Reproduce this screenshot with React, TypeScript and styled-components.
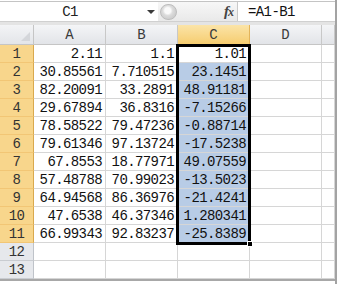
import React from "react";
import styled, { createGlobalStyle } from "styled-components";

const Global = createGlobalStyle`
  html, body { margin: 0; padding: 0; background: #ffffff; }
  #root { width: 337px; height: 284px; overflow: hidden; }
`;

const MONO = `"Liberation Mono", "DejaVu Sans Mono", monospace`;

const Window = styled.div`
  width: 337px;
  height: 284px;
  box-sizing: border-box;
  border-right: 2px solid #a3a3a3;
  padding-top: 1px;
  background: #ffffff;
  display: flex;
  flex-direction: column;
  overflow: hidden;
  font-family: ${MONO};
`;

const FormulaBar = styled.div`
  height: 20px;
  box-sizing: border-box;
  border-top: 1px solid #c4c4c4;
  display: flex;
  align-items: stretch;
  background: #ffffff;
`;

const NameBox = styled.div`
  width: 158px;
  display: flex;
  align-items: center;
  position: relative;
  color: #222;
  font-size: 14px;
  letter-spacing: -0.6px;
`;

const NameText = styled.div`
  width: 140px;
  text-align: center;
`;

const Arrow = styled.div`
  width: 0;
  height: 0;
  border-left: 4px solid transparent;
  border-right: 4px solid transparent;
  border-top: 4px solid #3a3a3a;
  margin-left: 7px;
  margin-top: 1px;
`;

const ButtonArea = styled.div`
  width: 79px;
  display: flex;
  align-items: center;
  background: linear-gradient(#f7f7f7, #e9e9e9);
  border-right: 1px solid #c9c9c9;
  position: relative;
`;

const Grip = styled.div`
  width: 17px;
  height: 16px;
  margin-left: 2px;
  border-radius: 8px;
  background: radial-gradient(circle at 45% 40%, #fafafa 0 3px, #dcdcdc 5px, #cfcfcf 8px);
  border: 1px solid #bdbdbd;
  box-sizing: border-box;
`;

const Fx = styled.div`
  margin-left: auto;
  margin-right: 4px;
  font-family: "Liberation Serif", "DejaVu Serif", serif;
  font-style: italic;
  font-weight: bold;
  font-size: 15px;
  color: #444;
  letter-spacing: -1px;
  & span { font-size: 12px; }
`;

const FormulaInput = styled.div`
  flex: 1;
  display: flex;
  align-items: center;
  padding-left: 10px;
  font-size: 14px;
  letter-spacing: -0.6px;
  color: #111;
`;

const Strip = styled.div`
  height: 3px;
  background: #e4e4e4;
  border-top: 1px solid #d0d0d0;
`;

const SheetArea = styled.div`
  position: relative;
  flex: 1;
  display: flex;
  flex-direction: column;
`;

const Grid = styled.div`
  display: grid;
  grid-template-columns: 34px 72px 72px 72px 72px 1fr;
  grid-template-rows: 20px repeat(13, 18px);
`;

const Corner = styled.div`
  background: linear-gradient(#f3f4f6, #e3e5e9);
  border-right: 1px solid #c5c5c5;
  border-bottom: 1px solid #c5c5c5;
  position: relative;
  &::after {
    content: "";
    position: absolute;
    right: 3px;
    bottom: 3px;
    width: 0;
    height: 0;
    border-left: 9px solid transparent;
    border-bottom: 9px solid #d4d6da;
  }
`;

const ColHead = styled.div<{ $sel?: boolean }>`
  background: ${(p) =>
    p.$sel
      ? "linear-gradient(#fbe4a8, #f6cd70)"
      : "linear-gradient(#f4f5f7, #e2e4e8)"};
  border-right: 1px solid ${(p) => (p.$sel ? "#e3b45a" : "#c8c8c8")};
  border-bottom: 1px solid ${(p) => (p.$sel ? "#e0ae50" : "#c5c5c5")};
  display: flex;
  align-items: center;
  justify-content: center;
  font-size: 14px;
  color: #3a3a3a;
`;

const RowHead = styled.div<{ $sel?: boolean }>`
  background: ${(p) => (p.$sel ? "#f8d68c" : "#e6e8ec")};
  border-right: 1px solid ${(p) => (p.$sel ? "#d9a94e" : "#bfc3c9")};
  border-bottom: 1px solid ${(p) => (p.$sel ? "#f2c675" : "#c9ccd1")};
  display: flex;
  align-items: center;
  justify-content: center;
  font-size: 14px;
  color: #333;
  letter-spacing: -0.6px;
`;

const Cell = styled.div<{ $sel?: boolean }>`
  background: ${(p) => (p.$sel ? "#b8cce6" : "#ffffff")};
  border-right: 1px solid #d6d6d6;
  border-bottom: 1px solid #d6d6d6;
  display: flex;
  align-items: center;
  justify-content: flex-end;
  padding-right: 3px;
  font-size: 14px;
  letter-spacing: -0.6px;
  color: #111;
  overflow: hidden;
  white-space: nowrap;
`;

const Selection = styled.div`
  position: absolute;
  left: 176px;
  top: -1px;
  width: 75px;
  height: 201px;
  box-sizing: border-box;
  border: 3px solid #000;
  pointer-events: none;
  margin-top: 20px;
`;

const Handle = styled.div`
  position: absolute;
  right: -5px;
  bottom: -5px;
  width: 6px;
  height: 6px;
  background: #000;
  border: 1px solid #fff;
  box-sizing: border-box;
`;

const BottomEdge = styled.div`
  height: 2px;
  background: #a8a8a8;
`;

const A = ["2.11", "30.85561", "82.20091", "29.67894", "78.58522", "79.61346", "67.8553", "57.48788", "64.94568", "47.6538", "66.99343"];
const B = ["1.1", "7.710515", "33.2891", "36.8316", "79.47236", "97.13724", "18.77971", "70.99023", "86.36976", "46.37346", "92.83237"];
const C = ["1.01", "23.1451", "48.91181", "-7.15266", "-0.88714", "-17.5238", "49.07559", "-13.5023", "-21.4241", "1.280341", "-25.8389"];

export default function App() {
  const rows = Array.from({ length: 13 }, (_, i) => i);
  return (
    <>
      <Global />
      <Window>
        <FormulaBar>
          <NameBox>
            <NameText>C1</NameText>
            <Arrow />
          </NameBox>
          <ButtonArea>
            <Grip />
            <Fx>
              f<span>x</span>
            </Fx>
          </ButtonArea>
          <FormulaInput>=A1-B1</FormulaInput>
        </FormulaBar>
        <Strip />
        <SheetArea>
          <Grid>
            <Corner />
            <ColHead>A</ColHead>
            <ColHead>B</ColHead>
            <ColHead $sel>C</ColHead>
            <ColHead>D</ColHead>
            <ColHead />
            {rows.map((i) => (
              <React.Fragment key={i}>
                <RowHead $sel={i < 11}>{i + 1}</RowHead>
                <Cell>{A[i] ?? ""}</Cell>
                <Cell>{B[i] ?? ""}</Cell>
                <Cell $sel={i > 0 && i < 11}>{C[i] ?? ""}</Cell>
                <Cell />
                <Cell />
              </React.Fragment>
            ))}
          </Grid>
          <BottomEdge />
          <Selection>
            <Handle />
          </Selection>
        </SheetArea>
      </Window>
    </>
  );
}
